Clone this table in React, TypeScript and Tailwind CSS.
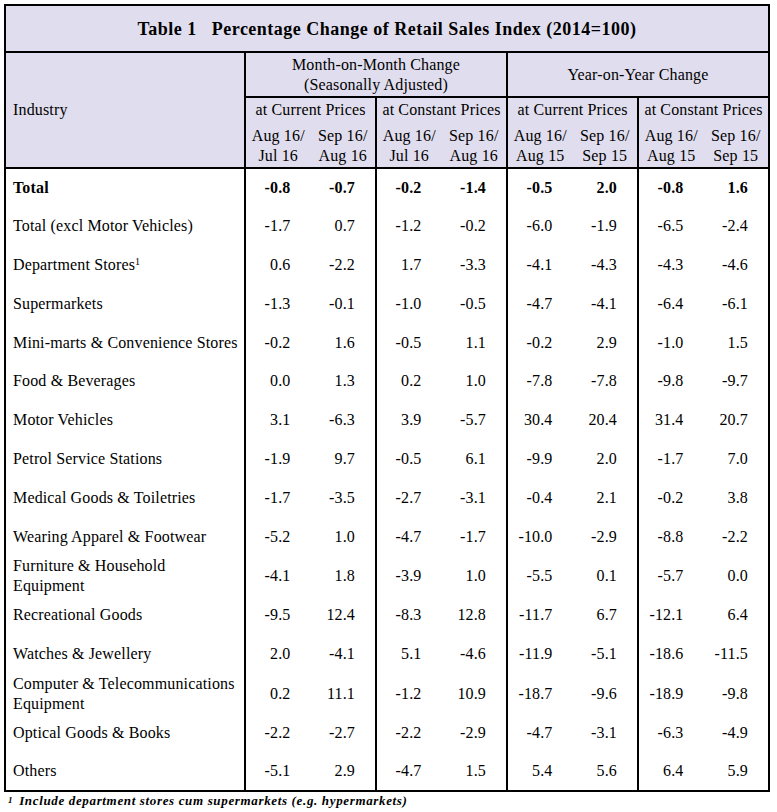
import React from "react";

type Row = { label: React.ReactNode; vals: string[]; bold?: boolean };

const rows: Row[] = [
  { label: "Total", vals: ["-0.8", "-0.7", "-0.2", "-1.4", "-0.5", "2.0", "-0.8", "1.6"], bold: true },
  { label: "Total (excl Motor Vehicles)", vals: ["-1.7", "0.7", "-1.2", "-0.2", "-6.0", "-1.9", "-6.5", "-2.4"] },
  {
    label: (
      <>
        Department Stores<sup className="text-[10px] relative -top-[5px]">1</sup>
      </>
    ),
    vals: ["0.6", "-2.2", "1.7", "-3.3", "-4.1", "-4.3", "-4.3", "-4.6"],
  },
  { label: "Supermarkets", vals: ["-1.3", "-0.1", "-1.0", "-0.5", "-4.7", "-4.1", "-6.4", "-6.1"] },
  { label: "Mini-marts & Convenience Stores", vals: ["-0.2", "1.6", "-0.5", "1.1", "-0.2", "2.9", "-1.0", "1.5"] },
  { label: "Food & Beverages", vals: ["0.0", "1.3", "0.2", "1.0", "-7.8", "-7.8", "-9.8", "-9.7"] },
  { label: "Motor Vehicles", vals: ["3.1", "-6.3", "3.9", "-5.7", "30.4", "20.4", "31.4", "20.7"] },
  { label: "Petrol Service Stations", vals: ["-1.9", "9.7", "-0.5", "6.1", "-9.9", "2.0", "-1.7", "7.0"] },
  { label: "Medical Goods & Toiletries", vals: ["-1.7", "-3.5", "-2.7", "-3.1", "-0.4", "2.1", "-0.2", "3.8"] },
  { label: "Wearing Apparel & Footwear", vals: ["-5.2", "1.0", "-4.7", "-1.7", "-10.0", "-2.9", "-8.8", "-2.2"] },
  {
    label: (
      <>
        Furniture &amp; Household
        <br />
        Equipment
      </>
    ),
    vals: ["-4.1", "1.8", "-3.9", "1.0", "-5.5", "0.1", "-5.7", "0.0"],
  },
  { label: "Recreational Goods", vals: ["-9.5", "12.4", "-8.3", "12.8", "-11.7", "6.7", "-12.1", "6.4"] },
  { label: "Watches & Jewellery", vals: ["2.0", "-4.1", "5.1", "-4.6", "-11.9", "-5.1", "-18.6", "-11.5"] },
  {
    label: (
      <>
        Computer &amp; Telecommunications
        <br />
        Equipment
      </>
    ),
    vals: ["0.2", "11.1", "-1.2", "10.9", "-18.7", "-9.6", "-18.9", "-9.8"],
  },
  { label: "Optical Goods & Books", vals: ["-2.2", "-2.7", "-2.2", "-2.9", "-4.7", "-3.1", "-6.3", "-4.9"] },
  { label: "Others", vals: ["-5.1", "2.9", "-4.7", "1.5", "5.4", "5.6", "6.4", "5.9"] },
];

const B = "border-2 border-black";

export default function App() {
  return (
    <div
      className="bg-white w-[777px] h-[812px] text-black"
      style={{ fontFamily: '"Liberation Serif", "Times New Roman", serif' }}
    >
      <div className="pl-[4px] pt-[4px]">
        <table className="border-collapse table-fixed text-[16px] leading-[20px] tracking-[0.15px]">
          <colgroup>
            <col className="w-[240px]" />
            <col className="w-[65.5px]" />
            <col className="w-[65.5px]" />
            <col className="w-[65.5px]" />
            <col className="w-[65.5px]" />
            <col className="w-[65.5px]" />
            <col className="w-[65.5px]" />
            <col className="w-[65.5px]" />
            <col className="w-[65.5px]" />
          </colgroup>
          <thead className="bg-[#e0deee]">
            <tr className="h-[47px]">
              <th
                colSpan={9}
                className={`${B} p-0 text-center font-bold text-[18px] tracking-[0.5px]`}
              >
                {"Table 1\u00a0\u00a0\u00a0Percentage Change of Retail Sales Index (2014=100)"}
              </th>
            </tr>
            <tr className="h-[45px]">
              <th rowSpan={3} className={`${B} p-0 pl-[7px] text-left font-normal`}>
                Industry
              </th>
              <th colSpan={4} className={`${B} p-0 text-center font-normal`}>
                Month-on-Month Change
                <br />
                (Seasonally Adjusted)
              </th>
              <th colSpan={4} className={`${B} p-0 text-center font-normal`}>
                Year-on-Year Change
              </th>
            </tr>
            <tr className="h-[25px]">
              <th colSpan={2} className="border-x-2 border-t-2 border-black p-0 text-center font-normal">
                at Current Prices
              </th>
              <th colSpan={2} className="border-x-2 border-t-2 border-black p-0 text-center font-normal">
                at Constant Prices
              </th>
              <th colSpan={2} className="border-x-2 border-t-2 border-black p-0 text-center font-normal">
                at Current Prices
              </th>
              <th colSpan={2} className="border-x-2 border-t-2 border-black p-0 text-center font-normal">
                at Constant Prices
              </th>
            </tr>
            <tr className="h-[46px]">
              {[
                ["Aug 16/", "Jul 16"],
                ["Sep 16/", "Aug 16"],
                ["Aug 16/", "Jul 16"],
                ["Sep 16/", "Aug 16"],
                ["Aug 16/", "Aug 15"],
                ["Sep 16/", "Sep 15"],
                ["Aug 16/", "Aug 15"],
                ["Sep 16/", "Sep 15"],
              ].map(([a, b], i) => (
                <th
                  key={i}
                  className={`border-b-2 border-black p-0 pt-[3px] text-center font-normal ${
                    i % 2 === 0 ? "border-l-2" : "border-r-2"
                  }`}
                >
                  {a}
                  <br />
                  {b}
                </th>
              ))}
            </tr>
          </thead>
          <tbody>
            {rows.map((r, ri) => (
              <tr key={ri} className="h-[38.8px]">
                <td
                  className={`border-x-2 border-black p-0 pl-[7px] text-left ${
                    ri === rows.length - 1 ? "border-b-2" : ""
                  } ${r.bold ? "font-bold" : ""}`}
                >
                  {r.label}
                </td>
                {r.vals.map((v, vi) => (
                  <td
                    key={vi}
                    className={`border-black p-0 pr-[20px] text-right ${
                      vi % 2 === 0 ? "border-l-2" : "border-r-2"
                    } ${ri === rows.length - 1 ? "border-b-2" : ""} ${r.bold ? "font-bold" : ""}`}
                  >
                    {v}
                  </td>
                ))}
              </tr>
            ))}
          </tbody>
        </table>
        <div className="pl-[4px] mt-[1px] text-[13px] leading-[16px] italic font-bold tracking-[0.65px]">
          <sup className="text-[9px] relative -top-[2px] mr-[6px]">1</sup>
          Include department stores cum supermarkets (e.g. hypermarkets)
        </div>
      </div>
    </div>
  );
}
